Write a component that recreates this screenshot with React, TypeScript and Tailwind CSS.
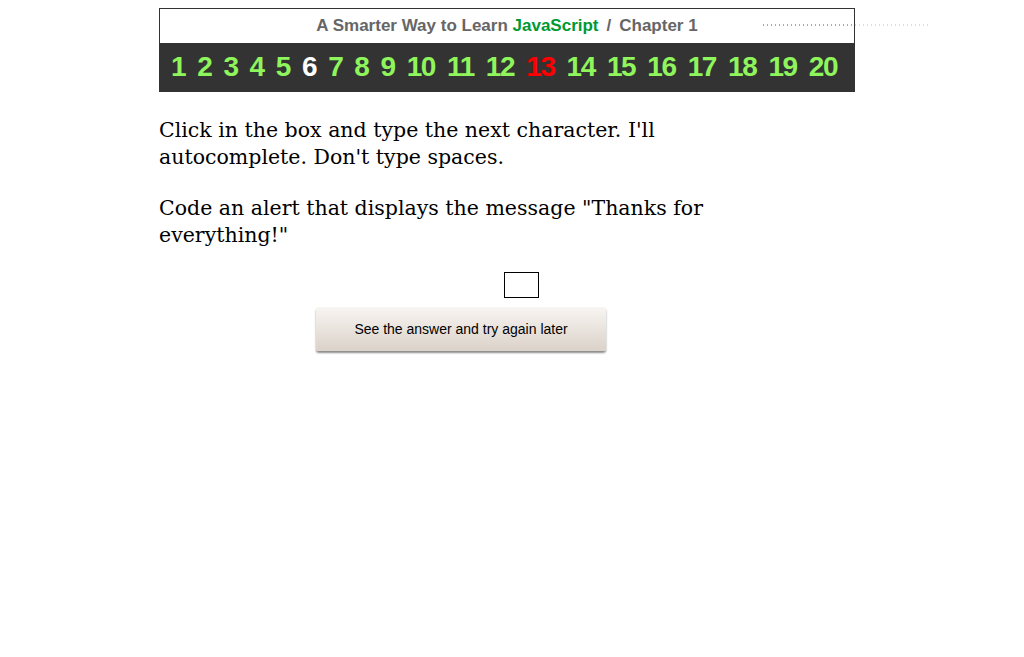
const chapters = Array.from({ length: 20 }, (_, i) => i + 1);

function numColor(n: number) {
  if (n === 6) return "text-white";
  if (n === 13) return "text-[#ff0000]";
  return "text-[#8ff55c]";
}

export default function App() {
  return (
    <div className="relative min-h-[657px] bg-white">
      {/* stray dotted rule sitting over the header */}
      <svg className="absolute left-[763px] top-[24px]" width="168" height="2">
        <line x1="0" y1="1" x2="91" y2="1" stroke="#555" strokeWidth="1" strokeDasharray="1 3" />
        <line x1="92" y1="1" x2="168" y2="1" stroke="#bbb" strokeWidth="1" strokeDasharray="1 3" />
      </svg>

      <div className="ml-[159px] w-[696px] pt-[8px]">
        <div className="border border-[#333333]">
          <div className="flex h-[34px] items-center justify-center bg-white font-['Liberation_Sans',Arial,sans-serif] text-[17px] font-bold text-[#666666]">
            <span>
              A Smarter Way to Learn <span className="text-[#009933]">JavaScript</span>
              <span className="mx-[8px]">/</span>Chapter 1
            </span>
          </div>
          <div className="flex h-[48px] items-center gap-[12px] bg-[#333333] pl-[11px] font-['Liberation_Sans',Arial,sans-serif] text-[28px] leading-none font-bold tracking-[-1.4px]">
            {chapters.map((n) => (
              <span key={n} className={numColor(n)}>
                {n}
              </span>
            ))}
          </div>
        </div>

        <div className="mt-[25px] w-[560px] font-['DejaVu_Serif',Georgia,serif] text-[20.5px] leading-[27px] text-black">
          <p>Click in the box and type the next character. I'll autocomplete. Don't type spaces.</p>
          <p className="mt-[24px]">Code an alert that displays the message "Thanks for everything!"</p>
        </div>

        <div className="mt-[23px] pl-[345px]">
          <input type="text" className="block h-[26px] w-[35px] border border-black bg-white outline-none" />
        </div>

        <div className="mt-[9px] pl-[157px]">
          <button className="flex h-[44px] w-[290px] items-center justify-center rounded-[3px] bg-gradient-to-b from-[#f8f5f2] to-[#dbd2c9] font-['Liberation_Sans',Arial,sans-serif] text-[14px] text-black shadow-[0_2px_2px_rgba(0,0,0,0.45)]">
            See the answer and try again later
          </button>
        </div>
      </div>
    </div>
  );
}
